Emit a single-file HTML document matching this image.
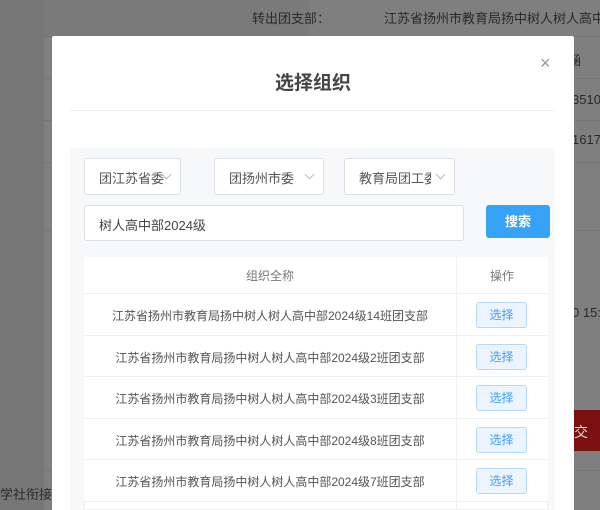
<!DOCTYPE html>
<html><head><meta charset="utf-8"><style>
*{box-sizing:border-box;margin:0;padding:0}
html,body{width:600px;height:510px;overflow:hidden}
body{position:relative;background:#7f7f7f;font-family:"Liberation Sans","Noto Sans CJK SC",sans-serif;color:#2b2b2b}
.a{position:absolute}
.bg{font-size:13px;color:#2a2a2a;white-space:nowrap}
.hl{position:absolute;left:44px;right:0;height:1px;background:#757575}
.m{position:absolute;left:52px;top:36px;width:522px;height:474px;background:#fff;border-radius:2px 2px 0 0}
.sel{position:absolute;top:158px;height:37px;border:1px solid #dcdfe6;border-radius:3px;background:#fff;font-size:13px;color:#555;white-space:nowrap;overflow:hidden}
.sel span{position:absolute;left:14px;top:9px;overflow:hidden}
.sel i{position:absolute;right:10px;top:12px;width:7px;height:7px;border-right:1px solid #bbb;border-bottom:1px solid #bbb;transform:rotate(45deg)}
.row{position:absolute;left:84px;width:464px;border-bottom:1px solid #edf0f5;background:#fff;font-size:12px;color:#555}
.row .n{position:absolute;left:0;width:372px;text-align:center}
.row .b{position:absolute;left:392px;width:51px;height:26px;background:#ecf5ff;border:1px solid #b3d8ff;border-radius:3px;color:#409eff;text-align:center;line-height:24px;font-size:12px}
</style></head><body>
<div class="a" style="left:0;top:0;width:44px;height:510px;background:#777"></div>
<div class="a" style="left:44px;top:0;width:266px;height:36px;background:#7a7a7a"></div>
<div class="hl" style="top:36px"></div><div class="hl" style="top:78px"></div><div class="hl" style="top:120px"></div><div class="hl" style="top:162px"></div><div class="hl" style="top:230px"></div>
<div class="a" style="left:0;right:0;top:470px;height:1px;background:#757575"></div>
<div class="a bg" style="left:252px;top:8px">转出团支部：</div>
<div class="a bg" style="left:384px;top:8px">江苏省扬州市教育局扬中树人树人高中部</div>
<div class="a bg" style="left:568px;top:50px">涵</div>
<div class="a bg" style="left:572px;top:92px">3510</div>
<div class="a bg" style="left:572px;top:132px">1617</div>
<div class="a bg" style="left:572px;top:305px">0 15:</div>
<div class="a" style="left:566px;top:410px;width:34px;height:41px;background:#7a1010;color:#ddd;font-size:14px;padding:12px 0 0 8px">交</div>
<div class="a bg" style="left:0;top:484px;font-size:13px">学社衔接</div>
<div class="m"></div>
<div class="a" style="left:540px;top:56px;font-size:18px;color:#999;line-height:14px">×</div>
<div class="a" style="left:52px;width:522px;top:68px;text-align:center;font-size:19px;font-weight:bold;color:#444">选择组织</div>
<div class="a" style="left:70px;top:110px;width:485px;height:1px;background:#eceef2"></div>
<div class="a" style="left:70px;top:148px;width:485px;height:362px;background:#f6f8fa"></div>
<div class="sel" style="left:84px;width:97px"><span style="width:66px">团江苏省委</span><i></i></div>
<div class="sel" style="left:214px;width:110px"><span style="width:66px">团扬州市委</span><i></i></div>
<div class="sel" style="left:344px;width:111px"><span style="width:72px">教育局团工委</span><i></i></div>
<div class="a" style="left:84px;top:205px;width:380px;height:36px;border:1px solid #dcdfe6;border-radius:3px;background:#fff;font-size:13px;color:#444;padding:9px 0 0 14px">树人高中部2024级</div>
<div class="a" style="left:486px;top:205px;width:64px;height:33px;background:#36a3f7;border-radius:3px;color:#fff;font-size:13px;font-weight:bold;text-align:center;line-height:33px">搜索</div>
<div class="a" style="left:84px;top:257px;width:464px;height:253px;background:#fff;border:1px solid #edf0f5"></div>
<div class="row" style="top:257px;height:37px;color:#777"><span class="n" style="top:10px">组织全称</span><span style="position:absolute;left:372px;width:92px;text-align:center;top:10px">操作</span></div>
<div class="row" style="top:294px;height:42px"><span class="n" style="top:13px">江苏省扬州市教育局扬中树人树人高中部2024级14班团支部</span><span class="b" style="top:8px">选择</span></div>
<div class="row" style="top:336px;height:41px"><span class="n" style="top:13px">江苏省扬州市教育局扬中树人树人高中部2024级2班团支部</span><span class="b" style="top:8px">选择</span></div>
<div class="row" style="top:377px;height:42px"><span class="n" style="top:13px">江苏省扬州市教育局扬中树人树人高中部2024级3班团支部</span><span class="b" style="top:8px">选择</span></div>
<div class="row" style="top:419px;height:41px"><span class="n" style="top:13px">江苏省扬州市教育局扬中树人树人高中部2024级8班团支部</span><span class="b" style="top:8px">选择</span></div>
<div class="row" style="top:460px;height:42px"><span class="n" style="top:13px">江苏省扬州市教育局扬中树人树人高中部2024级7班团支部</span><span class="b" style="top:8px">选择</span></div>
<div class="a" style="left:456px;top:257px;width:1px;height:253px;background:#edf0f5"></div>
</body></html>
